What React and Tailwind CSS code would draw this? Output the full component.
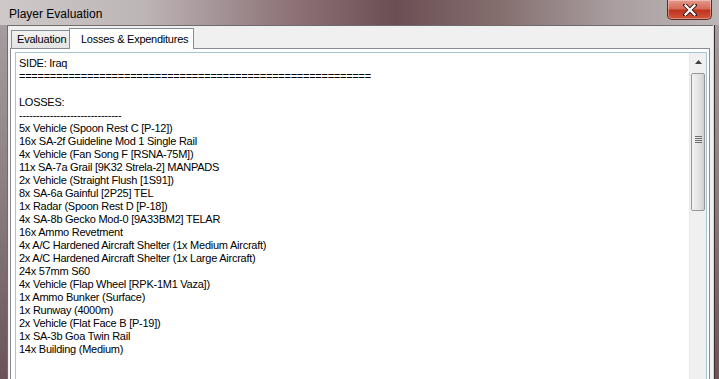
import React from 'react';

const lines = [
  'SIDE: Iraq',
  '=========================================================',
  '',
  'LOSSES:',
  '------------------------------',
  '5x Vehicle (Spoon Rest C [P-12])',
  '16x SA-2f Guideline Mod 1 Single Rail',
  '4x Vehicle (Fan Song F [RSNA-75M])',
  '11x SA-7a Grail [9K32 Strela-2] MANPADS',
  '2x Vehicle (Straight Flush [1S91])',
  '8x SA-6a Gainful [2P25] TEL',
  '1x Radar (Spoon Rest D [P-18])',
  '4x SA-8b Gecko Mod-0 [9A33BM2] TELAR',
  '16x Ammo Revetment',
  '4x A/C Hardened Aircraft Shelter (1x Medium Aircraft)',
  '2x A/C Hardened Aircraft Shelter (1x Large Aircraft)',
  '24x 57mm S60',
  '4x Vehicle (Flap Wheel [RPK-1M1 Vaza])',
  '1x Ammo Bunker (Surface)',
  '1x Runway (4000m)',
  '2x Vehicle (Flat Face B [P-19])',
  '1x SA-3b Goa Twin Rail',
  '14x Building (Medium)',
  '',
  '',
];

const CloseButton = () => (
  <div className="w-[45px] h-[20px] rounded-b-[5px] border border-t-0 border-[#5a2a26] bg-[linear-gradient(180deg,#e49a8d_0%,#d66b58_45%,#c0341f_55%,#cf553a_100%)] flex items-center justify-center shadow-[inset_0_0_0_1px_rgba(255,255,255,0.35)]">
    <svg width="14" height="12" viewBox="0 0 14 12">
      <path d="M2 1 L12 11 M12 1 L2 11" stroke="#3b1b18" strokeWidth="4" strokeLinecap="square" />
      <path d="M2.5 1.5 L11.5 10.5 M11.5 1.5 L2.5 10.5" stroke="#ffffff" strokeWidth="2.2" strokeLinecap="square" />
    </svg>
  </div>
);

const Scrollbar = () => (
  <div className="w-[17px] h-full bg-[#f0f0f0] flex flex-col border-l border-[#e8e8e8]">
    <div className="h-[18px] flex items-center justify-center">
      <svg width="7" height="4" viewBox="0 0 7 4">
        <path d="M0 4 L3.5 0 L7 4 Z" fill="#404040" />
      </svg>
    </div>
    <div className="mx-[1px] mt-[2px] h-[138px] rounded-[2px] border border-[#979797] bg-[linear-gradient(90deg,#f3f3f3,#e2e2e2_60%,#cfcfcf)] flex items-center justify-center">
      <div className="flex flex-col gap-[1px] -mt-[6px]">
        <div className="w-[7px] h-[1px] bg-[#6f6f6f]" />
        <div className="w-[7px] h-[1px] bg-[#6f6f6f]" />
        <div className="w-[7px] h-[1px] bg-[#6f6f6f]" />
        <div className="w-[7px] h-[1px] bg-[#6f6f6f]" />
      </div>
    </div>
  </div>
);

export default function App() {
  return (
    <div className="w-[719px] h-[379px] overflow-hidden flex flex-col bg-[linear-gradient(180deg,#aaa2a4,#8b7e80_50%,#6a5358)]" style={{ fontFamily: '"Liberation Sans", Arial, sans-serif' }}>
      {/* Title bar */}
      <div className="h-[25px] shrink-0 flex justify-between bg-[linear-gradient(90deg,#cfc9ca_0%,#bdb5b6_20%,#8e7479_40%,#6b4e54_55%,#86706f_70%,#a89d9f_85%,#bdb6b7_100%)]">
        <div className="pl-[9px] pt-[5px] text-[12px] text-black">
          Player Evaluation
        </div>
        <div className="pr-[7px]">
          <CloseButton />
        </div>
      </div>

      {/* Window body */}
      <div className="flex-1 flex pl-[7px] pr-[4px]">
        <div className="flex-1 flex flex-col bg-[#f0f0f0] border-t border-l border-[#6d6d6d] pl-[2px] pr-[3px] pt-[2px]">
          {/* Tabs */}
          <div className="h-[20px] flex items-end pl-[1px] relative z-10">
            <div className="h-[18px] w-[60px] pl-[5px] flex items-center border border-b-0 border-[#898c95] bg-[linear-gradient(180deg,#f2f2f2,#e3e3e3)] text-[11px] tracking-[-0.2px] text-black">
              Evaluation
            </div>
            <div className="h-[21px] -mb-[1px] -ml-[2px] w-[125px] pl-[11px] flex items-center border border-b-0 border-[#898c95] bg-white text-[11px] tracking-[-0.25px] text-black">
              Losses &amp; Expenditures
            </div>
          </div>
          {/* Tab panel */}
          <div className="flex-1 border border-b-0 border-[#898c95] bg-white pt-[3px] pl-[4px] pr-[2px]">
            <div className="h-full flex border border-b-0 border-[#a7c4d1]">
              <div className="flex-1 pl-[3px] pt-[4px] text-[11px] leading-[13px] tracking-[-0.25px] text-black">
                {lines.map((l, i) => (
                  <div key={i} className="h-[13px] whitespace-pre">{l}</div>
                ))}
              </div>
              <Scrollbar />
            </div>
          </div>
        </div>
        <div className="w-[1px] bg-[#d8d8d8]" />
        <div className="w-[1px] bg-[#3a2f31]" />
      </div>
    </div>
  );
}
